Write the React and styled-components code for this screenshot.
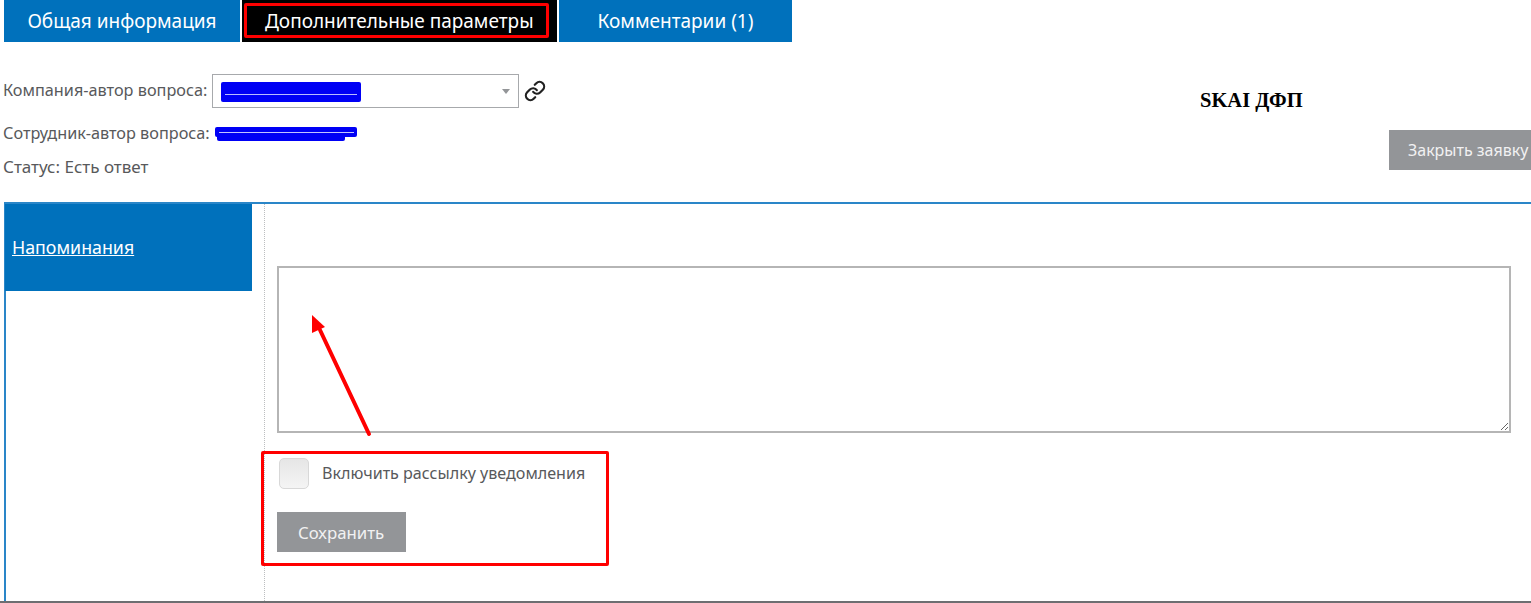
import React from 'react';
import styled, { createGlobalStyle } from 'styled-components';
import { Link } from 'lucide-react';

const GlobalStyle = createGlobalStyle`
  html, body {
    margin: 0;
    padding: 0;
    background: #fff;
    overflow: hidden;
  }
  body {
    font-family: 'Noto Sans', Tahoma, sans-serif;
    color: #58595b;
  }
`;

const tabs = [
  { label: 'Общая информация', width: 236 },
  { label: 'Дополнительные параметры', width: 315, active: true },
  { label: 'Комментарии (1)', width: 233 },
];

function App() {
  return (
    <Page>
      <GlobalStyle />
      <Tabs>
        {tabs.map((tab) => (
          <Tab key={tab.label} $width={tab.width} $active={tab.active}>
            {tab.active ? <Marked>{tab.label}</Marked> : tab.label}
          </Tab>
        ))}
      </Tabs>

      <Info>
        <div>
          <CompanyRow>
            <Label>Компания-автор вопроса:</Label>
            <Select>
              <Redacted />
              <Caret />
            </Select>
            <LinkIcon size={22} strokeWidth={2.4} />
          </CompanyRow>
          <AuthorRow>
            <span>Сотрудник-автор вопроса:</span>
            <RedactedName />
          </AuthorRow>
          <StatusRow>Статус: Есть ответ</StatusRow>
        </div>
        <Side>
          <Title>SKAI ДФП</Title>
          <GrayButton $width={142} $size={16} $pad={19}>Закрыть заявку</GrayButton>
        </Side>
      </Info>

      <Panel>
        <Sidebar>
          <SideItem>Напоминания</SideItem>
        </Sidebar>
        <Content>
          <Comment />
          <MarkedBox>
            <CheckRow>
              <Check />
              <span>Включить рассылку уведомления</span>
            </CheckRow>
            <GrayButton $width={129} $size={16.8} $pad={21}>Сохранить</GrayButton>
          </MarkedBox>
        </Content>
      </Panel>

      <Arrow viewBox="0 0 80 140" aria-hidden="true">
        <line x1="65" y1="134" x2="16" y2="30" stroke="#f00" strokeWidth="4" strokeLinecap="round" />
        <polygon points="8,15 8,33 21,27" fill="#f00" />
      </Arrow>
    </Page>
  );
}

const Page = styled.div`
  position: relative;
  width: 1531px;
  height: 603px;
  overflow: hidden;
  box-sizing: border-box;
  border-bottom: 2px solid #6d6e71;
`;

const Tabs = styled.div`
  display: flex;
  gap: 2px;
  height: 42px;
  padding-left: 4px;
`;

const Tab = styled.div`
  width: ${(p) => p.$width}px;
  display: flex;
  align-items: center;
  justify-content: ${(p) => (p.$active ? 'flex-start' : 'center')};
  background: ${(p) => (p.$active ? '#000' : '#0071bc')};
  color: #fff;
  font-size: 19px;
`;

const Marked = styled.span`
  box-sizing: border-box;
  width: 305px;
  height: 35px;
  margin-left: 2px;
  margin-top: -1px;
  padding-left: 18px;
  display: flex;
  align-items: center;
  border: 3px solid #f00;
  border-radius: 2px;
  white-space: nowrap;
`;

const Info = styled.div`
  display: flex;
  justify-content: space-between;
  height: 160px;
  padding-left: 3px;
  font-size: 16.25px;
`;

const CompanyRow = styled.div`
  display: flex;
  align-items: center;
  margin-top: 32px;
  height: 34px;
  gap: 5px;
`;

const Label = styled.span`
  margin-top: -2px;
`;

const Select = styled.div`
  box-sizing: border-box;
  position: relative;
  width: 307px;
  height: 34px;
  padding: 7px 0 0 8px;
  border: 1.5px solid #a7a9ac;
`;

const Caret = styled.i`
  position: absolute;
  right: 8px;
  top: 14px;
  border-left: 4.5px solid transparent;
  border-right: 4.5px solid transparent;
  border-top: 5px solid #939598;
`;

const Redacted = styled.span`
  position: relative;
  display: block;
  width: 140px;
  height: 20px;
  background: #0000f5;
  border-radius: 2px;
  &::after {
    content: '';
    position: absolute;
    left: 4px;
    right: 4px;
    top: 12px;
    height: 1px;
    background: #b9bdff;
  }
`;

const RedactedName = styled.span`
  position: relative;
  display: block;
  width: 142px;
  height: 10px;
  margin-top: 0;
  margin-bottom: 2px;
  background: #0000f5;
  border-radius: 2px;
  &::before {
    content: '';
    position: absolute;
    left: 2px;
    top: 8px;
    width: 128px;
    height: 6px;
    background: #0000f5;
    border-radius: 0 0 2px 2px;
  }
  &::after {
    content: '';
    position: absolute;
    left: 4px;
    right: 3px;
    top: 5px;
    height: 1px;
    background: #c3c6ff;
  }
`;

const LinkIcon = styled(Link)`
  color: #222;
`;

const AuthorRow = styled.div`
  display: flex;
  align-items: center;
  gap: 5px;
  margin-top: 13px;
  height: 24px;
`;

const StatusRow = styled.div`
  margin-top: 10px;
  font-size: 17px;
  line-height: 24px;
`;

const Side = styled.div`
  display: flex;
  flex-direction: column;
  align-items: flex-end;
`;

const Title = styled.div`
  width: 331px;
  margin: 46px 0 18px;
  font: bold 20.5px/24px 'Liberation Serif', serif;
  color: #000;
`;

const GrayButton = styled.div`
  box-sizing: border-box;
  width: ${(p) => p.$width}px;
  height: 40px;
  display: flex;
  align-items: center;
  padding-left: ${(p) => p.$pad}px;
  background: #939598;
  color: #f1f1f2;
  font-size: ${(p) => p.$size}px;
  white-space: nowrap;
`;

const Panel = styled.div`
  display: flex;
  height: 399px;
  margin-left: 4px;
  border-top: 2px solid #2a86c8;
  border-left: 2px solid #2a86c8;
`;

const Sidebar = styled.div`
  width: 258px;
  flex: none;
  border-right: 1px dotted #bcbec0;
`;

const SideItem = styled.div`
  width: 247px;
  height: 87px;
  margin-left: -1px;
  padding: 31px 0 0 7px;
  box-sizing: border-box;
  background: #0071bc;
  color: #fff;
  font-size: 17.8px;
  line-height: 24px;
  text-decoration: underline;
`;

const Content = styled.div`
  flex: 1;
  padding: 62px 20px 0 12px;
`;

const Comment = styled.textarea`
  display: block;
  box-sizing: border-box;
  width: 1234px;
  height: 167px;
  margin: 0;
  border: 2px solid #b5b5b5;
  border-radius: 0;
  outline: none;
`;

const MarkedBox = styled.div`
  box-sizing: border-box;
  width: 348px;
  height: 115px;
  margin: 18px 0 0 -16px;
  padding: 3px 0 0 13px;
  border: 3px solid #f00;
  border-radius: 2px;
`;

const CheckRow = styled.div`
  display: flex;
  align-items: center;
  gap: 13px;
  height: 32px;
  margin-bottom: 23px;
  padding-left: 2px;
  font-size: 16.1px;
`;

const Check = styled.span`
  box-sizing: border-box;
  width: 30px;
  height: 31px;
  border-radius: 5px;
  border: 1px solid #d8d8d8;
  background: linear-gradient(#e6e6e6, #f4f4f4);
`;

const Arrow = styled.svg`
  position: absolute;
  left: 304px;
  top: 300px;
  width: 80px;
  height: 140px;
`;

export default App;
